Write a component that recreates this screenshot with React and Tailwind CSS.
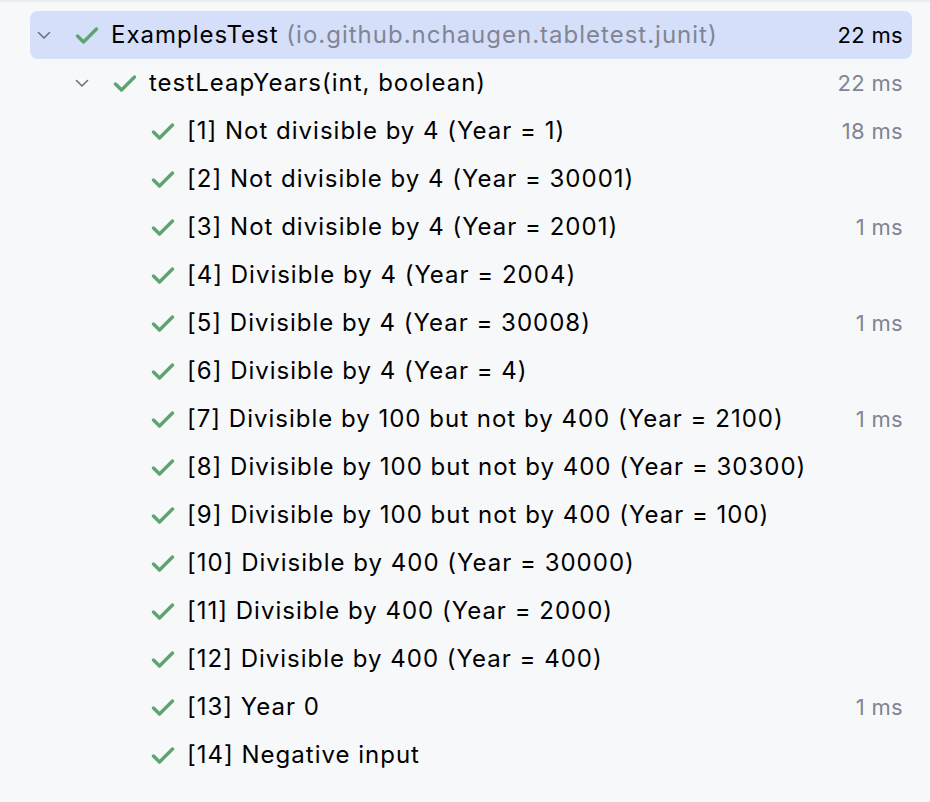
import React from "react";

const Chevron = () => (
  <svg width="14" height="9" viewBox="0 0 14 9" fill="none">
    <polyline points="1.5,1.5 7,7 12.5,1.5" stroke="#6c707e" strokeWidth="1.6" strokeLinecap="round" strokeLinejoin="round" />
  </svg>
);

const Check = () => (
  <svg width="24" height="19" viewBox="0 0 24 19" fill="none">
    <polyline points="2.5,10 8.5,16 21.5,3" stroke="#5fa36f" strokeWidth="3.4" strokeLinecap="round" strokeLinejoin="round" />
  </svg>
);

const rows = [
  { level: 0, chevron: true, text: "ExamplesTest", sub: " (io.github.nchaugen.tabletest.junit)", time: "22 ms", selected: true },
  { level: 1, chevron: true, text: "testLeapYears(int, boolean)", time: "22 ms" },
  { level: 2, text: "[1] Not divisible by 4 (Year = 1)", time: "18 ms" },
  { level: 2, text: "[2] Not divisible by 4 (Year = 30001)" },
  { level: 2, text: "[3] Not divisible by 4 (Year = 2001)", time: "1 ms" },
  { level: 2, text: "[4] Divisible by 4 (Year = 2004)" },
  { level: 2, text: "[5] Divisible by 4 (Year = 30008)", time: "1 ms" },
  { level: 2, text: "[6] Divisible by 4 (Year = 4)" },
  { level: 2, text: "[7] Divisible by 100 but not by 400 (Year = 2100)", time: "1 ms" },
  { level: 2, text: "[8] Divisible by 100 but not by 400 (Year = 30300)" },
  { level: 2, text: "[9] Divisible by 100 but not by 400 (Year = 100)" },
  { level: 2, text: "[10] Divisible by 400 (Year = 30000)" },
  { level: 2, text: "[11] Divisible by 400 (Year = 2000)" },
  { level: 2, text: "[12] Divisible by 400 (Year = 400)" },
  { level: 2, text: "[13] Year 0", time: "1 ms" },
  { level: 2, text: "[14] Negative input" },
];

const indent = ["pl-0", "pl-[38px]", "pl-[76px]"];

export default function App() {
  return (
    <div className="w-[930px] h-[802px] bg-[#f7f8fa] overflow-hidden" style={{ fontFamily: "Inter, 'Noto Sans', sans-serif" }}>
      <div className="h-[2px] bg-[#ebecf0]" />
      <div className="pt-[9px] ml-[30px] mr-[18px] flex flex-col">
        {rows.map((r, i) => (
          <div
            key={i}
            className={`h-[48px] flex items-center pr-[9px] rounded-[8px] ${r.selected ? "bg-[#d5dffa]" : ""}`}
          >
            <div className={`flex items-center flex-1 min-w-0 ${indent[r.level]}`}>
              <span className="w-[42px] flex pl-[7px] shrink-0">{r.chevron ? <Chevron /> : null}</span>
              <span className="w-[30px] flex justify-center shrink-0"><Check /></span>
              <span className="ml-[9px] text-[24px] text-[#000000] whitespace-nowrap tracking-[1px]">
                {r.text}
                {r.sub ? <span className="text-[#818594]">{r.sub}</span> : null}
              </span>
            </div>
            {r.time ? (
              <span className={`text-[22px] whitespace-nowrap tracking-[0.3px] ${r.selected ? "text-[#000000]" : "text-[#818594]"}`}>{r.time}</span>
            ) : null}
          </div>
        ))}
      </div>
    </div>
  );
}
